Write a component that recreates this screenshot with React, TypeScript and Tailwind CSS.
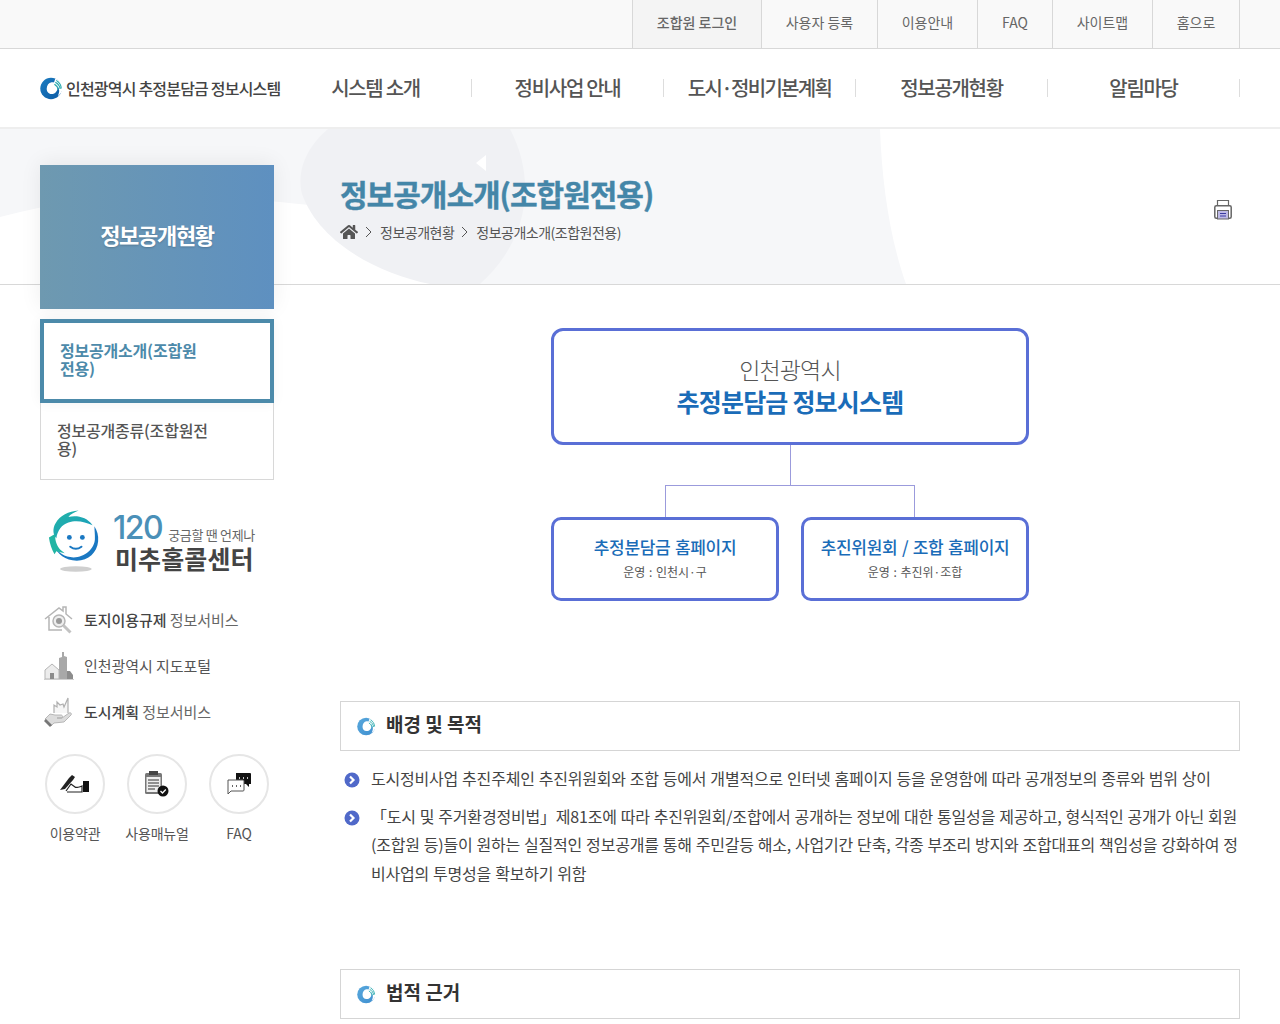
import React from "react";
import { FaHome } from "react-icons/fa";

const F = { fontFamily: '"Noto Sans CJK KR", "Noto Sans", sans-serif' };

function Swirl({ size = 24, id, light }: { size?: number; id: string; light?: boolean }) {
  return (
    <svg width={size} height={size} viewBox="0 0 24 24" className="shrink-0">
      <defs>
        <linearGradient id={id} x1="0" y1="0" x2="1" y2="1">
          <stop offset="0" stopColor={light ? "#58a8dc" : "#1c7cc0"} />
          <stop offset="1" stopColor={light ? "#3f8fd0" : "#0b5aa5"} />
        </linearGradient>
      </defs>
      <circle cx="11.500" cy="12" r="11.200" fill={`url(#${id})`} />
      <path d="M12 5.500c3.500-.5 6.500 2 6.500 5.500 0 3.800-3 7-6.500 6.800-3.200-.2-5.200-2.700-5-5.800.2-3.300 2-6 5-6.500z" fill="#fff" />
      <path d="M16 1.500c4.500 2 7.500 5.500 7.500 10 0 3.500-2 6.500-5 8.500 1.500-2.800 2-5.600 1-8.200-.8-2.400-2.400-4.300-5-5.800z" fill="#fff" />
      <path d="M17 3.500c3 2 5.200 5 5.200 8.500M16 5.500c2.800 1.500 4.700 4 5 7M15 7.500c2.300 1.200 3.600 3.400 4 6" stroke="#23a8ab" strokeWidth="1.100" fill="none" />
    </svg>
  );
}

function SmileLogo() {
  return (
    <svg width="52" height="66" viewBox="0 0 56 70" className="shrink-0">
      <defs>
        <linearGradient id="sm" x1="0" y1="0" x2="1" y2="1">
          <stop offset="0" stopColor="#22b5a4" />
          <stop offset="1" stopColor="#1a9ac2" />
        </linearGradient>
      </defs>
      <path d="M50 17c3 5 4.500 10 4 16-1 12-10.500 21-23 21S10 47 6.500 38c4 7 11.500 12.500 21 12.500C40 50.500 50 41 50.500 31c.2-5-.5-9.500-.5-14z" fill="#1a78c2" />
      <path d="M8 14C13 5 22 1 33 0c-5 2-9 4-11 7 9-2 20 0 26 9-8-4-18-6-26-3C15 15 10 22 9 30 5 26 5 19 8 14z" fill="url(#sm)" />
      <path d="M1 29l7-4c-1 6 1 12 5 17l5 4-9-2-2 3C4 42 2 36 1 29z" fill="#22b5a4" />
      <circle cx="23" cy="29" r="2.600" fill="#1a78c2" />
      <circle cx="37" cy="29" r="2.600" fill="#1a78c2" />
      <path d="M24 39c4 3 8 3 12 0" stroke="#1a78c2" strokeWidth="2.200" fill="none" strokeLinecap="round" />
      <ellipse cx="30" cy="63" rx="17" ry="3" fill="#cfcfcf" />
    </svg>
  );
}

function IconHouse() {
  return (
    <svg width="30" height="32" viewBox="0 0 30 32">
      <path d="M1 15L15 4l4 3V3h3v7l6 5M5 13v13h13" stroke="#b5b5b5" strokeWidth="1.500" fill="none" />
      <circle cx="15" cy="17" r="6" stroke="#b5b5b5" strokeWidth="1.500" fill="#eee" />
      <circle cx="15" cy="17" r="3" fill="#9a9a9a" />
      <path d="M19.500 21.500l7 7" stroke="#c2c2c2" strokeWidth="3" />
    </svg>
  );
}

function IconMap() {
  return (
    <svg width="30" height="30" viewBox="0 0 30 30">
      <path d="M15 28V7l3-1V1h2v4l3 1v22z" fill="#a8a8a8" />
      <path d="M23 28V20h3l3 4v4z" fill="#8c8c8c" />
      <path d="M1 28V19l7-6 7 6v9z" fill="#ececec" stroke="#b5b5b5" />
      <path d="M6 22h4v6H6z" fill="#8c8c8c" />
      <path d="M0 28.500h30" stroke="#cfcfcf" />
    </svg>
  );
}

function IconHand() {
  return (
    <svg width="30" height="30" viewBox="0 0 30 30">
      <path d="M1 22l5-5 5 1h6c2 0 2 3 0 3h-4 5l7-5c2-1 3 1 2 2l-7 7-10 1-3 3z" fill="#dcdcdc" stroke="#aaa" strokeWidth=".8" />
      <path d="M0 24l6 6 2-2-6-6z" fill="#777" />
      <path d="M10 16V8l3 2V5l3 3 3-1 1 3 4-9v15" stroke="#b0b0b0" strokeWidth="1.200" fill="#f6f6f6" />
    </svg>
  );
}

function IconPen() {
  return (
    <svg width="30" height="20" viewBox="0 0 30 20">
      <path d="M0 16L9 4l3-3 3 2-2 3-8 9z" fill="#222" />
      <path d="M6 17l5-7 4 3c1 1 5 0 7-1v6H7" fill="#fff" stroke="#222" strokeWidth="1.200" />
      <rect x="23" y="7" width="6" height="11" fill="#111" />
    </svg>
  );
}

function IconDoc() {
  return (
    <svg width="26" height="28" viewBox="0 0 26 28">
      <rect x="1" y="3" width="17" height="21" rx="1.500" fill="#777" />
      <rect x="2.500" y="7" width="14" height="15" fill="#eee" />
      <path d="M4 10h11M4 13h11M4 16h11M4 19h7" stroke="#333" strokeWidth="1.200" />
      <rect x="5" y="1" width="9" height="4" fill="#444" />
      <circle cx="19" cy="21" r="5.500" fill="#111" />
      <path d="M16.500 21l2 2 3.300-3.500" stroke="#fff" strokeWidth="1.300" fill="none" />
    </svg>
  );
}

function IconChat() {
  return (
    <svg width="26" height="24" viewBox="0 0 26 24">
      <path d="M10 1h14a1 1 0 011 1v10h-2v3l-3-3H10z" fill="#111" />
      <path d="M13 6h1M17 6h1M21 6h1" stroke="#fff" strokeWidth="1.500" />
      <path d="M2 8h15a1 1 0 011 1v9a1 1 0 01-1 1H5l-3 3z" fill="#fff" stroke="#555" />
      <path d="M6 14h1M10 14h1M14 14h1" stroke="#333" strokeWidth="1.500" />
    </svg>
  );
}

function Printer() {
  return (
    <svg width="18" height="21" viewBox="0 0 18 21">
      <path d="M3.500 7V1.500h11V7" fill="none" stroke="#666" strokeWidth="1.200" />
      <rect x=".8" y="6.800" width="16.400" height="12.500" rx="1.500" fill="#fff" stroke="#666" strokeWidth="1.500" />
      <rect x="3.500" y="11.500" width="11" height="8.500" fill="#bdb9e6" stroke="#666" />
      <path d="M6 14.500h6M6 17h6" stroke="#3a3aa0" />
    </svg>
  );
}

function Bullet() {
  return (
    <svg width="16" height="16" viewBox="0 0 16 16" className="shrink-0 mt-[8px]">
      <circle cx="8" cy="8" r="7.500" fill="#5069c9" />
      <path d="M6 4.500L9.500 8 6 11.500" stroke="#fff" strokeWidth="2.200" fill="none" />
    </svg>
  );
}

function SectionTitle({ children, id }: { children: React.ReactNode; id: string }) {
  return (
    <div className="h-[50px] border border-[#d5d5d5] flex items-center pl-[16px] gap-[10px]">
      <Swirl size={19} id={id} light />
      <h3 className="text-[19px] font-bold text-[#333] pb-[3px]">{children}</h3>
    </div>
  );
}

const top = [
  ["조합원 로그인", "w-[130px] font-medium bg-[#f4f4f4] border-l text-[#555]"],
  ["사용자 등록", "w-[116px]"],
  ["이용안내", "w-[100px]"],
  ["FAQ", "w-[75px]"],
  ["사이트맵", "w-[100px]"],
  ["홈으로", "w-[87px]"],
];
const nav = [
  ["시스템 소개", "tracking-[-1.3px]"],
  ["정비사업 안내", "tracking-[-1.3px]"],
  ["도시·정비기본계획", "tracking-[-1.7px]"],
  ["정보공개현황", "tracking-[-1.3px]"],
  ["알림마당", "tracking-[-1.3px]"],
];

export default function App() {
  return (
    <div style={F} className="w-full min-h-[1024px] bg-white text-[#444] overflow-hidden">
      <div className="h-[49px] bg-[#f9f9f9] border-b border-[#d8d8d8] flex justify-end pr-[40px]">
        {top.map(([t, c]) => (
          <a key={t} className={`h-full flex items-center justify-center pb-[3px] border-r border-[#d8d8d8] text-[14px] text-[#666] ${c}`}>
            {t}
          </a>
        ))}
      </div>

      <header className="h-[80px] border-b-2 border-[#eeeeee] flex items-center pl-[40px] pr-[40px]">
        <div className="w-[240px] flex items-center gap-[3px] shrink-0">
          <Swirl size={23} id="l1" />
          <span className="text-[16px] font-medium text-[#444] tracking-[-0.8px] whitespace-nowrap">인천광역시 추정분담금 정보시스템</span>
        </div>
        <nav className="flex flex-1">
          {nav.map(([n, c]) => (
            <div key={n} className="w-[192px] h-[18px] flex items-center justify-center border-r border-[#dddddd]">
              <span className={`text-[20px] font-medium text-[#555] whitespace-nowrap ${c}`}>{n}</span>
            </div>
          ))}
        </nav>
      </header>

      <div className="relative">
        <div className="absolute inset-x-0 top-0 h-[156px] border-b border-[#d8d8d8] overflow-hidden bg-white">
          <svg width="1280" height="155" viewBox="0 0 1280 155" className="block">
            <path d="M0 0h880c2 55 10 110 26 155H0z" fill="#f6f7f9" />
            <path d="M0 88C60 72 120 64 180 66c50 2 90 6 130 10h130v79H0z" fill="#ffffff" />
            <path d="M328 0h182c26 50 20 110-30 155H430c-50-10-110-40-128-90-6-25 6-48 26-65z" fill="#f0f1f4" />
            <path d="M486 26l-10 8 10 8z" fill="#fff" />
          </svg>
        </div>

        <div className="relative flex pl-[40px] pr-[40px] pt-[36px]">
          <aside className="w-[234px] shrink-0 mr-[66px]">
            <div className="h-[144px] flex items-center justify-center pb-[5px] bg-gradient-to-r from-[#6e99b0] to-[#5e90c0] shadow-[0_-2px_20px_rgba(0,0,0,0.07)]">
              <h2 className="text-[22px] font-bold text-white tracking-[-1.3px] [text-shadow:0_1px_2px_rgba(0,0,0,0.2)]">정보공개현황</h2>
            </div>
            <ul className="mt-[10px]">
              <li className="h-[84px] border-[4px] border-[#4c8aaa] pl-[16px] pr-[60px] pt-[18px] text-[16px] leading-[18px] font-bold text-[#4c8aaa] tracking-[-0.2px] shadow-[0_0_12px_rgba(0,0,0,0.05)]">
                정보공개소개(조합원전용)
              </li>
              <li className="h-[77px] border border-t-0 border-[#d8d8d8] pl-[16px] pr-[60px] pt-[18px] text-[16px] leading-[18px] font-medium text-[#555] tracking-[-0.2px]">
                정보공개종류(조합원전용)
              </li>
            </ul>

            <div className="mt-[30px] flex items-start pl-[8px]">
              <SmileLogo />
              <div className="ml-[13px] mt-[1px]">
                <div className="flex items-end h-[34px]">
                  <span className="text-[32px] leading-[34px] font-medium text-[#4a90b8] tracking-[-1.5px]" style={{ fontFamily: '"Inter", sans-serif' }}>120</span>
                  <span className="text-[13px] leading-[18px] ml-[6px] mb-[1px] text-[#666] tracking-[-0.3px]">궁금할 땐 언제나</span>
                </div>
                <div className="text-[25px] leading-[26px] font-bold text-[#444] ml-[2px] whitespace-nowrap tracking-[0.1px]">미추홀콜센터</div>
              </div>
            </div>

            <ul className="mt-[29px] flex flex-col gap-[16px] pl-[4px]">
              <li className="h-[30px] flex items-center gap-[10px] text-[15px] tracking-[-0.05px]"><span className="w-[30px]"><IconHouse /></span><span className="text-[#666] whitespace-nowrap"><b className="font-medium text-[#444]">토지이용규제</b> 정보서비스</span></li>
              <li className="h-[30px] flex items-center gap-[10px] text-[15px] tracking-[-0.05px]"><span className="w-[30px]"><IconMap /></span><span className="text-[#555] whitespace-nowrap">인천광역시 지도포털</span></li>
              <li className="h-[30px] flex items-center gap-[10px] text-[15px] tracking-[-0.05px]"><span className="w-[30px]"><IconHand /></span><span className="text-[#666] whitespace-nowrap"><b className="font-medium text-[#444]">도시계획</b> 정보서비스</span></li>
            </ul>

            <div className="mt-[27px] flex pl-[5px] gap-[22px]">
              {[
                ["이용약관", <IconPen key="a" />],
                ["사용매뉴얼", <IconDoc key="b" />],
                ["FAQ", <IconChat key="c" />],
              ].map(([t, icon]) => (
                <div key={t as string} className="w-[60px] flex flex-col items-center">
                  <div className="w-[60px] h-[60px] rounded-full border-2 border-[#e6e6e6] flex items-center justify-center">{icon}</div>
                  <span className="mt-[9px] text-[14px] text-[#555] tracking-[-0.2px] whitespace-nowrap">{t}</span>
                </div>
              ))}
            </div>
          </aside>

          <main className="flex-1 min-w-0 relative">
            <h1 className="mt-[6px] text-[30px] leading-[44px] font-bold text-[#4486a8] tracking-[-1px] [-webkit-text-stroke:0.4px_#4486a8]">정보공개소개(조합원전용)</h1>
            <div className="mt-[7px] flex items-center text-[14px] text-[#555] tracking-[-0.5px] h-[20px]">
              <FaHome className="text-[#555] text-[18px]" />
              <svg width="8" height="12" viewBox="0 0 8 12" className="mx-[7px]"><path d="M1 1l5 5-5 5" stroke="#555" fill="none" /></svg>
              <span>정보공개현황</span>
              <svg width="8" height="12" viewBox="0 0 8 12" className="mx-[7px]"><path d="M1 1l5 5-5 5" stroke="#555" fill="none" /></svg>
              <span>정보공개소개(조합원전용)</span>
            </div>
            <div className="absolute right-[8px] top-[34px]"><Printer /></div>

            <section className="mt-[86px] w-[478px] ml-[211px] text-center">
              <div className="h-[117px] border-[3px] border-[#5a6fd6] rounded-[12px] flex flex-col items-center justify-center pb-[2px]">
                <div className="text-[23px] leading-[30px] font-light text-[#555] tracking-[-0.9px]">인천광역시</div>
                <div className="text-[25px] leading-[34px] font-bold text-[#1a6cb8] tracking-[-0.8px]">추정분담금 정보시스템</div>
              </div>
              <div className="w-[1px] h-[40px] bg-[#9b9bdc] mx-auto" />
              <div className="h-[32px] w-[250px] mx-auto border border-b-0 border-[#9b9bdc]" />
              <div className="flex justify-between">
                {[
                  ["추정분담금 홈페이지", "운영 : 인천시·구"],
                  ["추진위원회 / 조합 홈페이지", "운영 : 추진위·조합"],
                ].map(([a, b]) => (
                  <div key={a} className="w-[228px] h-[84px] border-[3px] border-[#5a6fd6] rounded-[10px] flex flex-col items-center justify-center pb-[4px]">
                    <div className="text-[17px] leading-[26px] font-medium text-[#1a6cb8] tracking-[-0.3px] [word-spacing:1px] whitespace-nowrap">{a}</div>
                    <div className="mt-[3px] text-[12px] leading-[18px] text-[#555] tracking-[0px] [word-spacing:1px]">{b}</div>
                  </div>
                ))}
              </div>
            </section>

            <section className="mt-[100px]">
              <SectionTitle id="s1">배경 및 목적</SectionTitle>
              <ul className="mt-[13px] text-[16px] leading-[28.500px] text-[#444] tracking-[-0.2px] [word-spacing:0.6px]">
                <li className="flex gap-[11px] pl-[4px]"><Bullet /><p>도시정비사업 추진주체인 추진위원회와 조합 등에서 개별적으로 인터넷 홈페이지 등을 운영함에 따라 공개정보의 종류와 범위 상이</p></li>
                <li className="flex gap-[11px] pl-[4px] mt-[9px]"><Bullet /><p>「도시 및 주거환경정비법」제81조에 따라 추진위원회/조합에서 공개하는 정보에 대한 통일성을 제공하고, 형식적인 공개가 아닌 회원(조합원 등)들이 원하는 실질적인 정보공개를 통해 주민갈등 해소, 사업기간 단축, 각종 부조리 방지와 조합대표의 책임성을 강화하여 정비사업의 투명성을 확보하기 위함</p></li>
              </ul>
            </section>

            <section className="mt-[82px]">
              <SectionTitle id="s2">법적 근거</SectionTitle>
            </section>
          </main>
        </div>
      </div>
    </div>
  );
}
